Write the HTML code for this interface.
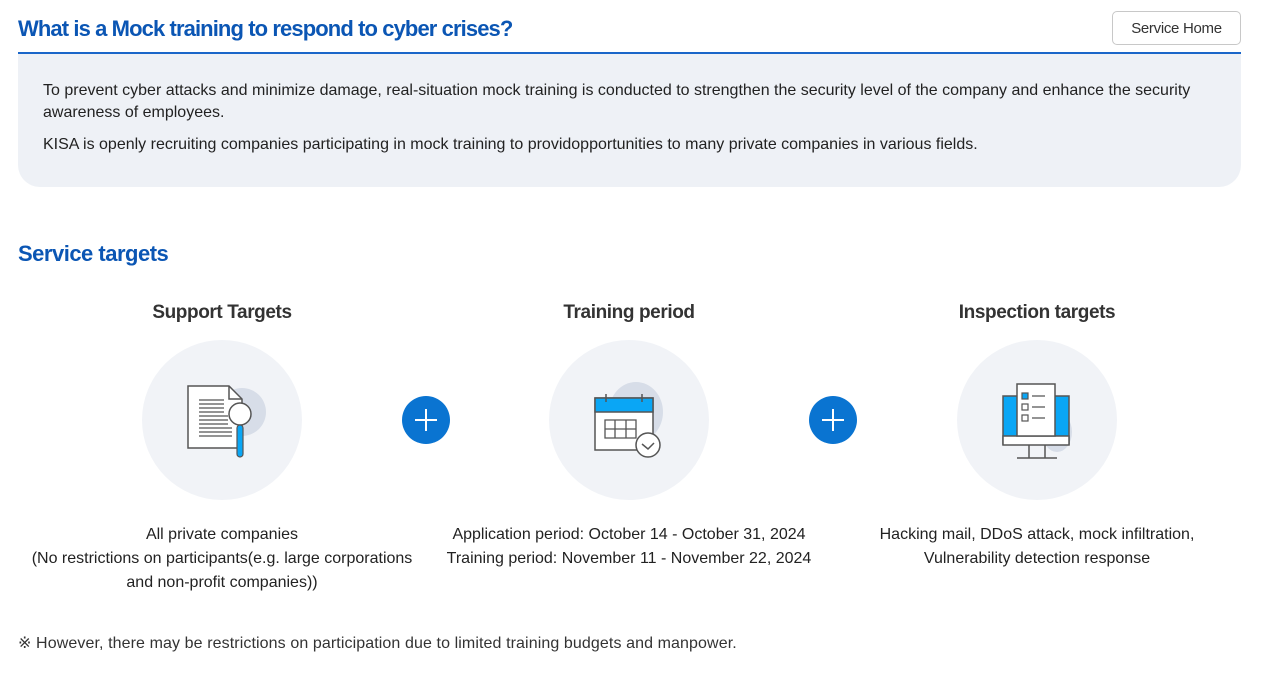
<!DOCTYPE html>
<html><head><meta charset="utf-8"><style>
*{margin:0;padding:0;box-sizing:border-box}
body{width:1283px;height:696px;background:#fff;font-family:"Liberation Sans",sans-serif;color:#222;position:relative;overflow:hidden}
h1{position:absolute;left:18px;top:16px;font-size:22px;color:#0b56b4;font-weight:bold;letter-spacing:-0.9px}
.btn{position:absolute;left:1112px;top:11px;width:129px;height:34px;border:1px solid #c8c8c8;border-radius:5px;font-size:15px;color:#333;text-align:center;line-height:33px;letter-spacing:-0.3px}
.line{position:absolute;left:18px;top:52px;width:1223px;height:2px;background:#1a66c9}
.box{position:absolute;left:18px;top:54px;width:1223px;height:133px;background:#eef1f6;border-radius:0 0 22px 22px;padding:26px 25px;font-size:16px;line-height:22px;color:#222;letter-spacing:0}
h2{position:absolute;left:18px;top:241px;font-size:22px;color:#0b56b4;font-weight:bold;letter-spacing:-0.5px}
.t{position:absolute;width:400px;text-align:center;font-size:19px;font-weight:bold;color:#333;top:302px;letter-spacing:-0.4px}
.c{position:absolute;width:160px;height:160px;border-radius:50%;background:#f1f3f7;top:340px}
.p{position:absolute;width:48px;height:48px;border-radius:50%;background:#0a74d1;top:396px}
.p:before{content:"";position:absolute;left:13px;top:23px;width:22px;height:2px;background:#fff}
.p:after{content:"";position:absolute;left:23px;top:13px;width:2px;height:22px;background:#fff}
.d{position:absolute;width:440px;text-align:center;font-size:16px;line-height:24px;top:523px;color:#222;letter-spacing:0}
.note{position:absolute;left:18px;top:633px;font-size:16px;color:#333;letter-spacing:0.1px}
</style></head><body>
<h1>What is a Mock training to respond to cyber crises?</h1>
<div class="btn">Service Home</div>
<div class="line"></div>
<div class="box"><p>To prevent cyber attacks and minimize damage, real-situation mock training is conducted to strengthen the security level of the company and enhance the security awareness of employees.</p><p style="margin-top:10px">KISA is openly recruiting companies participating in mock training to providopportunities to many private companies in various fields.</p></div>
<h2>Service targets</h2>
<div class="t" style="left:22px">Support Targets</div>
<div class="t" style="left:429px">Training period</div>
<div class="t" style="left:837px">Inspection targets</div>
<div class="c" style="left:142px"><svg width="160" height="160">
<circle cx="100" cy="72" r="24" fill="#d7dde8"/>
<path d="M46 46H87L100 59V108H46Z" fill="#fff" stroke="#555" stroke-width="1.5"/>
<path d="M87 46V59H100" fill="none" stroke="#555" stroke-width="1.5"/>
<g stroke="#555" stroke-width="1.3"><path d="M57 60H82M57 64H82M57 68H82M57 72H82M57 76H86M57 80H86M57 84H86M57 88H90M57 92H90M57 96H90"/></g>
<circle cx="98" cy="74" r="11" fill="#fff" stroke="#555" stroke-width="1.5"/>
<rect x="95" y="85" width="6" height="32" rx="3" fill="#0aa6f5" stroke="#555" stroke-width="1.2"/>
</svg></div>
<div class="p" style="left:402px"></div>
<div class="c" style="left:549px"><svg width="160" height="160">
<ellipse cx="87" cy="72" rx="27" ry="30" fill="#d7dde8"/>
<rect x="46" y="58" width="58" height="52" fill="#fff" stroke="#555" stroke-width="1.5"/>
<rect x="46" y="58" width="58" height="14" fill="#0aa6f5" stroke="#555" stroke-width="1.5"/>
<path d="M57 54V62M93 54V62" stroke="#555" stroke-width="1.5"/>
<path d="M56 80H87V98H56ZM56 89H87M66 80V98M77 80V98" fill="none" stroke="#555" stroke-width="1.3"/>
<circle cx="99" cy="105" r="12" fill="#fff" stroke="#555" stroke-width="1.5"/>
<path d="M93 104L99 109L105 103" fill="none" stroke="#555" stroke-width="1.5"/>
</svg></div>
<div class="p" style="left:809px"></div>
<div class="c" style="left:957px"><svg width="160" height="160">
<ellipse cx="100" cy="92" rx="15" ry="20" fill="#d7dde8"/>
<rect x="46" y="56" width="66" height="48" fill="#0aa6f5" stroke="#555" stroke-width="1.5"/>
<rect x="46" y="96" width="66" height="9" fill="#fff" stroke="#555" stroke-width="1.5"/>
<path d="M72 105V118H88V105M60 118H100" fill="none" stroke="#555" stroke-width="1.5"/>
<rect x="60" y="44" width="38" height="52" fill="#fff" stroke="#555" stroke-width="1.5"/>
<rect x="65" y="53" width="6" height="6" fill="#0aa6f5" stroke="#555" stroke-width="1.2"/>
<rect x="65" y="64" width="6" height="6" fill="#fff" stroke="#555" stroke-width="1.2"/>
<rect x="65" y="75" width="6" height="6" fill="#fff" stroke="#555" stroke-width="1.2"/>
<path d="M75 56H88M75 67H88M75 78H88" stroke="#555" stroke-width="1.3"/>
</svg></div>
<div class="d" style="left:2px">All private companies<br>(No restrictions on participants(e.g. large corporations<br>and non-profit companies))</div>
<div class="d" style="left:409px">Application period: October 14 - October 31, 2024<br>Training period: November 11 - November 22, 2024</div>
<div class="d" style="left:817px">Hacking mail, DDoS attack, mock infiltration,<br>Vulnerability detection response</div>
<div class="note">※ However, there may be restrictions on participation due to limited training budgets and manpower.</div>
</body></html>
